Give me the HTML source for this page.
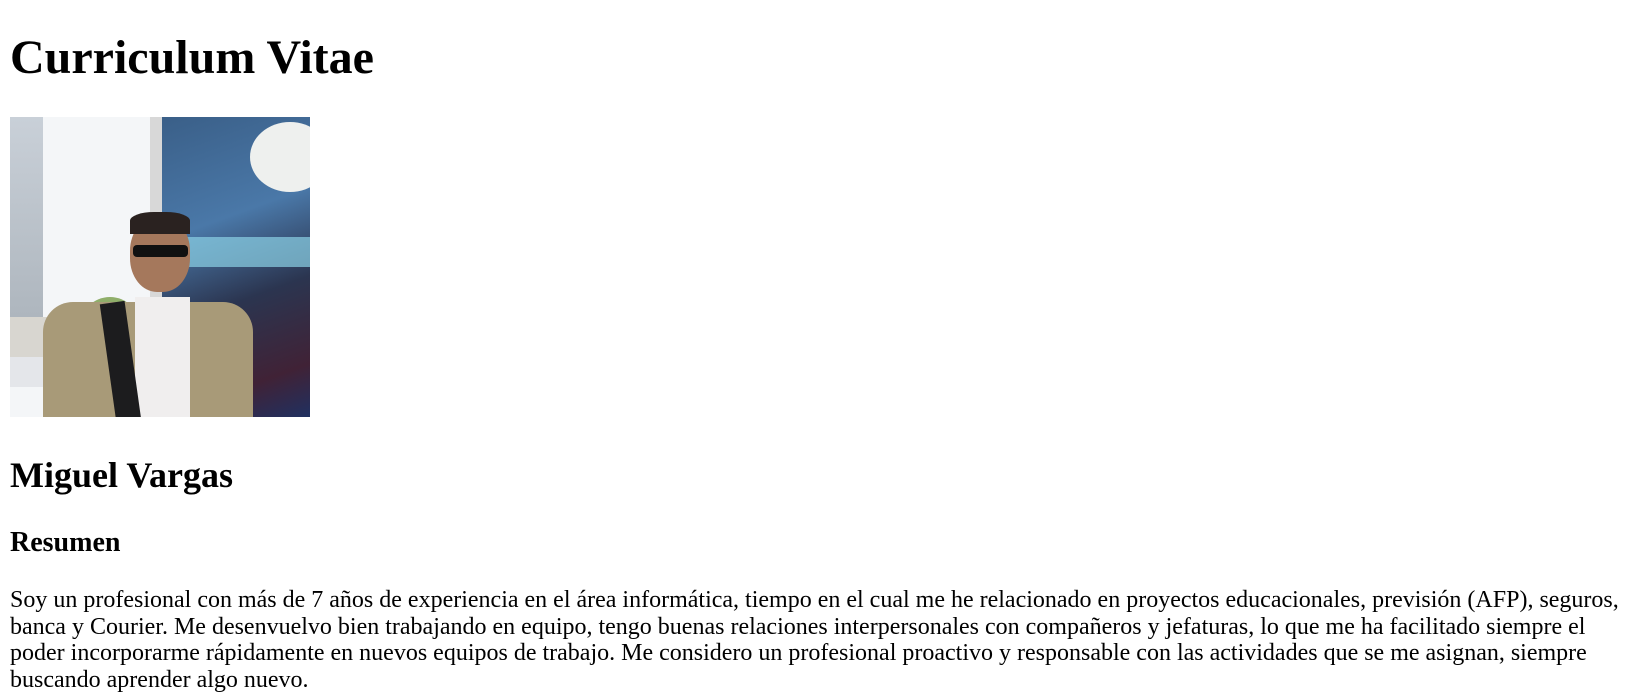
<!DOCTYPE html>
<html><head><meta charset="utf-8"><style>
html,body{margin:0;padding:0;background:#fff;width:1645px;height:699px;overflow:hidden;font-family:"Liberation Serif",serif;color:#000}
.a{position:absolute;left:10px;white-space:nowrap;margin:0}
h1{font-size:48px;line-height:48px;top:34px}
h2{font-size:36px;line-height:36px;top:457px}
h3{font-size:28px;line-height:28px;top:529px}
p{font-size:24px;line-height:26.5px;top:587px}
#ph{position:absolute;left:10px;top:117px;width:300px;height:300px;overflow:hidden;background:#f4f6f8}
#ph div{position:absolute}
</style></head><body>
<h1 class="a">Curriculum Vitae</h1>
<div id="ph">
 <div style="left:0;top:0;width:33px;height:200px;background:linear-gradient(#c9d0d8,#aeb6be)"></div>
 <div style="left:0;top:200px;width:140px;height:50px;background:#d8d6d0"></div>
 <div style="left:70px;top:180px;width:60px;height:60px;border-radius:50%;background:#8fae6a"></div>
 <div style="left:0;top:240px;width:100px;height:30px;background:#e4e6ea"></div>
 <div style="left:140px;top:0;width:160px;height:300px;background:#d8d8d8"></div>
 <div style="left:152px;top:0;width:148px;height:300px;background:linear-gradient(160deg,#3a5f88,#4a78a8 35%,#2b3550 60%,#402236 85%,#203060)"></div>
 <div style="left:240px;top:5px;width:80px;height:70px;border-radius:50%;background:#eef0ee"></div>
 <div style="left:170px;top:120px;width:130px;height:30px;background:rgba(140,210,230,.7)"></div>
 <div style="left:120px;top:100px;width:60px;height:75px;border-radius:45%;background:#a5785c"></div>
 <div style="left:120px;top:95px;width:60px;height:22px;border-radius:40% 40% 0 0;background:#2a2220"></div>
 <div style="left:123px;top:128px;width:55px;height:12px;background:#111;border-radius:4px"></div>
 <div style="left:33px;top:185px;width:210px;height:130px;border-radius:30px 30px 0 0;background:#a89a78"></div>
 <div style="left:125px;top:180px;width:55px;height:130px;background:#f0eeee"></div>
 <div style="left:98px;top:185px;width:25px;height:120px;background:#1c1c1e;transform:rotate(-8deg)"></div>
</div>
<h2 class="a">Miguel Vargas</h2>
<h3 class="a">Resumen</h3>
<p class="a">Soy un profesional con más de 7 años de experiencia en el área informática, tiempo en el cual me he relacionado en proyectos educacionales, previsión (AFP), seguros,<br>banca y Courier. Me desenvuelvo bien trabajando en equipo, tengo buenas relaciones interpersonales con compañeros y jefaturas, lo que me ha facilitado siempre el<br>poder incorporarme rápidamente en nuevos equipos de trabajo. Me considero un profesional proactivo y responsable con las actividades que se me asignan, siempre<br>buscando aprender algo nuevo.</p>
</body></html>
